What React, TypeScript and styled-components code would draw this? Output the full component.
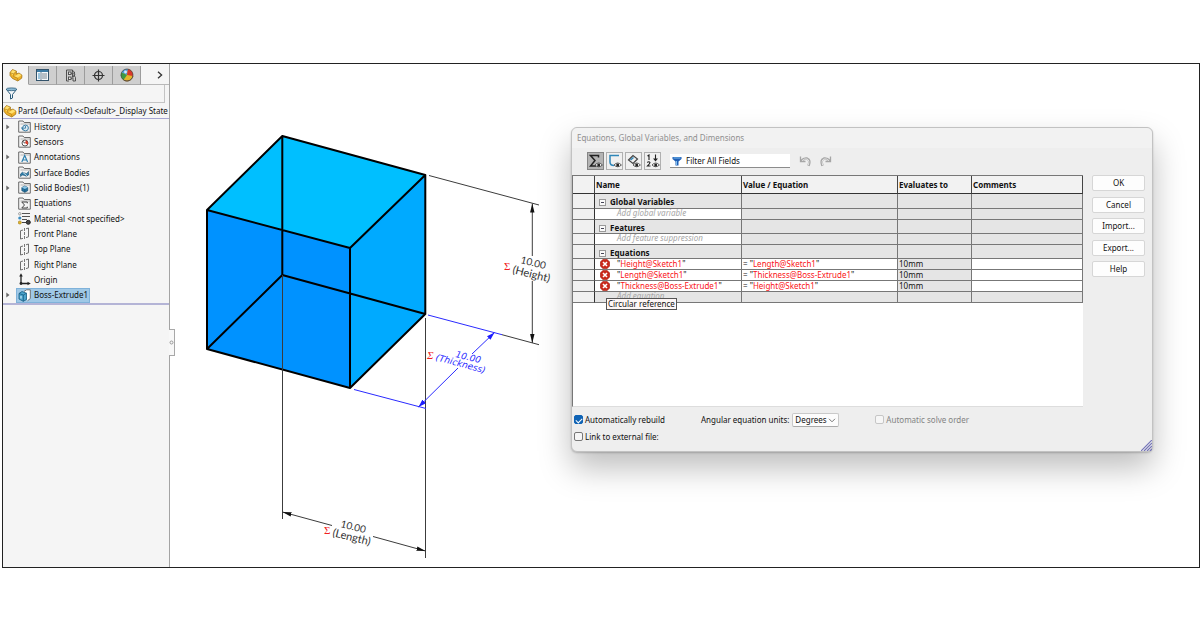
import React from 'react';
import styled, { createGlobalStyle } from 'styled-components';

const Global = createGlobalStyle`
  * { box-sizing: border-box; }
  body { margin: 0; background: #fff; }
  body, button, input, select { font-family: "Noto Sans", "Open Sans", sans-serif; font-size: 8px; line-height: 10px; color: #111; }
  svg { display: block; flex: none; }
`;

const Page = styled.div`
  min-height: 100vh;
  padding: 63px 0 62px 2px;
  display: flex;
`;
const Frame = styled.main`
  flex: 1;
  display: flex;
  border: 1px solid #222;
`;

/* ---------- feature tree ---------- */
const Sidebar = styled.aside`
  flex: none;
  width: 167px;
  background: #f5f5f5;
  border-right: 1px solid #a4a4a4;
  padding-top: 2px;
`;
const Tabs = styled.div`
  display: flex;
  height: 19px;
`;
const Tab = styled.button<{ $active?: boolean }>`
  width: ${p => (p.$active ? 26 : 28)}px;
  padding: 0;
  display: grid;
  place-items: center;
  border: 0;
  border-right: 1px solid #9c9c9c;
  border-bottom: 1px solid ${p => (p.$active ? '#f5f5f5' : '#a8a8a8')};
  background: ${p => (p.$active ? '#f5f5f5' : '#cfcfcf')};
`;
const MoreTabs = styled.button`
  flex: 1;
  padding: 0 6px 0 0;
  border: 0;
  border-bottom: 1px solid #b9b9b9;
  background: transparent;
  display: flex;
  align-items: center;
  justify-content: flex-end;
`;
const TreeFilter = styled.label`
  display: flex;
  align-items: center;
  height: 18px;
  margin-right: 4px;
  padding-left: 2px;
  border: 1px solid #c4c4c4;
  border-width: 0 1px 1px 0;
`;
const TreeFilterInput = styled.input`
  flex: 1;
  min-width: 0;
  border: 0;
  background: transparent;
  outline: 0;
`;
const RootRow = styled.div`
  display: flex;
  align-items: center;
  gap: 1px;
  height: 16px;
  white-space: nowrap;
  overflow: hidden;
  border-bottom: 1px solid #a6a6d2;
`;
const Tree = styled.ul`
  list-style: none;
  margin: 0;
  padding: 0;
  height: 186px;
  display: flex;
  flex-direction: column;
  border-bottom: 2px solid #b4b4d6;
`;
const TreeRow = styled.li`
  flex: 1;
  display: flex;
  align-items: center;
`;
const Expander = styled.button`
  width: 13px;
  height: 10px;
  padding: 0 0 0 3px;
  border: 0;
  background: transparent;
`;
const TreeItem = styled.span<{ $selected?: boolean }>`
  display: flex;
  align-items: center;
  gap: 3px;
  height: 15px;
  padding: 0 1px;
  border: 1px solid ${p => (p.$selected ? '#7fb2da' : 'transparent')};
  background: ${p => (p.$selected ? '#9fc8e6' : 'transparent')};
`;
const Spacer = styled.span`
  width: 13px;
`;

/* ---------- graphics area ---------- */
const Viewport = styled.section`
  flex: 1;
  position: relative;
  background: #fff;
`;
const PaneHandle = styled.button`
  position: absolute;
  left: -1px;
  top: 265px;
  width: 6px;
  height: 27px;
  padding: 0;
  display: grid;
  place-items: center;
  background: #f8f8f8;
  border: 1px solid #a8a8a8;
  border-left: 0;
`;

/* ---------- equations dialog ---------- */
const Dialog = styled.section`
  position: absolute;
  top: 63px;
  right: 46px;
  width: 582px;
  border: 1px solid #c2c2c2;
  border-radius: 6px;
  background: #eee;
  box-shadow: 0 16px 32px rgba(0, 0, 0, 0.26), 0 1px 2px rgba(0, 0, 0, 0.2);
`;
const DialogTitle = styled.h1`
  margin: 0;
  height: 20px;
  padding: 0 5px;
  font-size: 8px;
  line-height: 20px;
  font-weight: 400;
  color: #8f8f8f;
  background: #f2f2f2;
  border-radius: 6px 6px 0 0;
`;
const Toolbar = styled.div`
  display: flex;
  align-items: center;
  gap: 2px;
  height: 27px;
  padding: 0 15px 1px;
`;
const ToolButton = styled.button<{ $pressed?: boolean }>`
  width: 17px;
  height: 18px;
  padding: 0;
  display: grid;
  place-items: center;
  border: 1px solid ${p => (p.$pressed ? '#858585' : '#b0b0b0')};
  background: ${p => (p.$pressed ? '#b4b4b4' : '#f0f0f0')};
`;
const FieldFilter = styled.label`
  display: flex;
  align-items: center;
  gap: 4px;
  width: 120px;
  height: 14px;
  margin: 0 4px 0 7px;
  padding-left: 2px;
  background: #fff;
  border-bottom: 1px solid #8c8c8c;
`;
const FieldFilterInput = styled.input`
  flex: 1;
  min-width: 0;
  padding: 0;
  border: 0;
  outline: 0;
  background: transparent;
`;
const PlainButton = styled.button`
  width: 18px;
  padding: 0;
  display: grid;
  place-items: center;
  border: 0;
  background: transparent;
`;
const Body = styled.div`
  display: flex;
`;
const GridPane = styled.div`
  flex: 1;
  min-height: 232px;
  background: #fff;
  border-left: 1px solid #777;
  border-bottom: 1px solid #ddd;
`;
const EquationTable = styled.table`
  width: 100%;
  table-layout: fixed;
  border-spacing: 0;
  border-top: 1px solid #777;
`;
const Th = styled.th<{ $w?: number }>`
  width: ${p => (p.$w ? p.$w + 'px' : 'auto')};
  height: 18px;
  padding: 0 1px;
  text-align: left;
  font-weight: 700;
  background: #f2f2f2;
  border-right: 1px solid #444;
  border-bottom: 1px solid #333;
`;
const Td = styled.td<{ $h?: number; $tone?: 'white' | 'gray' | 'head' }>`
  position: relative;
  height: ${p => p.$h || 11}px;
  padding: 0 1px;
  line-height: 10px;
  vertical-align: top;
  white-space: nowrap;
  background: ${p => (p.$tone === 'white' ? '#fff' : p.$tone === 'head' ? '#f0f0f0' : '#e5e5e5')};
  border-right: 1px solid ${p => (p.$tone === 'head' ? '#333' : '#777')};
  border-bottom: 1px solid #777;
`;
const GroupName = styled.div`
  display: flex;
  align-items: center;
  gap: 4px;
  padding: 3px 0 0 3px;
  font-weight: 700;
`;
const Placeholder = styled.div`
  padding-left: 21px;
  line-height: 8px;
  font-style: italic;
  color: #a6a6a6;
`;
const EquationName = styled.div`
  display: flex;
  align-items: center;
  gap: 7px;
  height: 10px;
  padding-left: 4px;
`;
const Red = styled.span`
  color: #fa1420;
`;
const Tooltip = styled.div`
  position: absolute;
  z-index: 1;
  left: 11px;
  top: 6px;
  height: 12px;
  padding: 0 1px;
  line-height: 10px;
  background: #fdf6f6;
  border: 1px solid #555;
`;
const Actions = styled.div`
  width: 69px;
  height: 102px;
  padding: 0 7px 0 9px;
  display: flex;
  flex-direction: column;
  justify-content: space-between;
`;
const ActionButton = styled.button`
  height: 16px;
  padding: 0;
  border: 1px solid #d6d6d6;
  border-radius: 2px;
  background: #fdfdfd;
`;
const Footer = styled.div`
  display: flex;
  align-items: flex-start;
  height: 44px;
  padding: 6px 2px 0;
`;
const Options = styled.div`
  width: 127px;
  display: grid;
  row-gap: 4px;
`;
const Check = styled.label<{ $off?: boolean }>`
  display: flex;
  align-items: center;
  gap: 2px;
  height: 13px;
  color: ${p => (p.$off ? '#838383' : '#111')};
`;
const CheckInput = styled.input`
  appearance: none;
  width: 9px;
  height: 9px;
  margin: 0;
  border: 1px solid #777;
  border-radius: 2px;
  background: #f6f6f6;
  display: grid;
  place-items: center;
  &:disabled { border-color: #c6c6c6; }
  &:checked { background: #0f63b5; border-color: #0f63b5; }
  &:checked::after {
    content: '';
    width: 5px;
    height: 3px;
    border: solid #fff;
    border-width: 0 0 1px 1px;
    transform: rotate(-45deg);
  }
`;
const UnitsLabel = styled.label`
  display: flex;
  align-items: center;
  gap: 3px;
  margin-right: 36px;
`;
const SelectBox = styled.span`
  display: grid;
  align-items: center;
  width: 47px;
  > * { grid-area: 1 / 1; }
  > svg { justify-self: end; margin-right: 3px; pointer-events: none; }
`;
const Select = styled.select`
  appearance: none;
  height: 14px;
  padding: 0 2px;
  border: 1px solid #c9c9c9;
  border-bottom-color: #aaa;
  border-radius: 2px;
  background: #fcfcfc;
`;
const Grip = styled.span`
  position: absolute;
  right: 0;
  bottom: 0;
`;

/* ---------- icons ---------- */
const PartIcon = () => (
  <svg width="14" height="14" viewBox="0 0 14 14">
    <path d="M1 4.500L3.500 1.500L7.500 3.200L7.300 6L10 5L13 7.200L12.700 10.200L8.800 13L3.500 10.500L1 7.500Z" fill="#efb22a" stroke="#9a6a0c" strokeWidth=".7" strokeLinejoin="round" />
    <path d="M1.600 4.600L3.800 2L7 3.500L4.800 5.500L4.500 8L7 7.500L10 5.600L12.400 7.300L8.700 9.700L4.500 8Z" fill="#ffe070" />
    <path d="M1.300 4.800L4.600 5.800V8.500L8.700 10.300V12.600M4.600 5.800L7.200 3.500" fill="none" stroke="#a87612" strokeWidth=".6" />
  </svg>
);
const ListIcon = () => (
  <svg width="13" height="12" viewBox="0 0 13 12">
    <rect x=".5" y=".5" width="12" height="11" fill="#f4f8fb" stroke="#33536b" />
    <rect x="1" y="1" width="11" height="2" fill="#3b7aa3" />
    <path d="M5 3V11" stroke="#33536b" strokeWidth=".7" />
    <path d="M2.200 5h1.600M2.200 7h1.600M2.200 9h1.600" stroke="#1c7bb5" strokeWidth="1.200" />
    <path d="M6 5h5M6 7h5M6 9h5" stroke="#6b7b86" strokeWidth=".9" />
  </svg>
);
const ConfigIcon = () => (
  <svg width="12" height="13" viewBox="0 0 12 13" fill="none" stroke="#444" strokeWidth=".9">
    <path d="M1.500 12V1H7.500V3.500M1.500 12H4" />
    <rect x="3.500" y="3" width="2.500" height="2.500" fill="#eee" />
    <rect x="3.500" y="8" width="2.500" height="2.500" fill="#eee" />
    <path d="M6 4.300H7.500M6 9.300H7.500M7.500 1.500L9.500 3V7L7.500 8.200V3.500M9.500 7L10.500 8.500V12H8V8.500" />
    <circle cx="8.700" cy="5.200" r="1.100" fill="#ddd" />
  </svg>
);
const TargetIcon = () => (
  <svg width="13" height="13" viewBox="0 0 13 13" fill="none" stroke="#333" strokeWidth="1.200">
    <circle cx="6.500" cy="6.500" r="4" />
    <path d="M6.500 .5V12.500M.5 6.500H12.500" />
  </svg>
);
const BallIcon = () => (
  <svg width="14" height="14" viewBox="0 0 14 14">
    <circle cx="7" cy="7" r="6" fill="#e4b62c" />
    <path d="M7 7 L1.500 4.500 A6 6 0 0 1 8 1Z" fill="#4a9be0" />
    <path d="M7 7 L8 1 A6 6 0 0 1 12.900 8Z" fill="#d8372a" />
    <path d="M7 7 L1.500 4.500 A6 6 0 0 0 3.500 11.900Z" fill="#3d9a45" />
    <path d="M3.500 11.900 A6 6 0 0 0 12.900 8" fill="none" stroke="#8a5a1a" />
    <circle cx="7" cy="7" r="6" fill="none" stroke="#444" strokeWidth=".7" />
    <circle cx="5.500" cy="4" r="1.400" fill="#fff" opacity=".8" />
  </svg>
);
const FunnelIcon = () => (
  <svg width="13" height="13" viewBox="0 0 13 13">
    <path d="M1.500 2.500L5.500 7.500V12L7.500 11V7.500L11.500 2.500Z" fill="#f3f7fa" stroke="#2b5b7a" strokeLinejoin="round" />
    <ellipse cx="6.500" cy="2.300" rx="5.300" ry="1.400" fill="#8fbcd6" stroke="#2b5b7a" strokeWidth=".8" />
  </svg>
);
const Folder = ({ children }: { children: React.ReactNode }) => (
  <svg width="13" height="13" viewBox="0 0 13 13">
    <path d="M.7 12.200V1H5L6.200 2.500H12.300V12.200Z" fill="#f4f4f4" stroke="#6b6b6b" />
    <path d="M2.500 4H12" stroke="#999" strokeWidth=".7" />
    {children}
  </svg>
);
const HistoryIcon = () => (
  <Folder>
    <circle cx="7.500" cy="8" r="2.900" fill="#dceaf2" stroke="#3c7ea6" />
    <path d="M7.500 6V8.200H5.500" fill="none" stroke="#3c7ea6" strokeWidth=".9" />
    <path d="M2.800 7.500L4.700 10.500L5.500 7.500Z" fill="#3c7ea6" />
  </Folder>
);
const SensorsIcon = () => (
  <Folder>
    <circle cx="7" cy="8" r="3" fill="#fff" stroke="#555" />
    <path d="M7 8L8 5.200A3 3 0 0 1 9.500 9.800Z" fill="#d43c2c" />
    <path d="M5 6.500L7 8.300" stroke="#333" strokeWidth=".9" />
  </Folder>
);
const AnnotationsIcon = () => (
  <Folder>
    <path d="M3.800 11L6.700 4.500L9.600 11M5 9H8.500" fill="none" stroke="#2d80b0" strokeWidth="1.200" />
  </Folder>
);
const SurfaceIcon = () => (
  <Folder>
    <path d="M2.500 8Q4.500 5 6.500 7T10.500 5.500V9Q8.500 11 6.500 9.500T2.500 10.500Z" fill="#2f7fab" stroke="#174d6d" strokeWidth=".6" />
    <path d="M5 6.500L9 9.800" stroke="#fff" strokeWidth=".7" />
  </Folder>
);
const SolidIcon = () => (
  <Folder>
    <path d="M3.800 6.500L6.800 5L9.800 6.500V9.700L6.800 11.300L3.800 9.700Z" fill="#2673a0" stroke="#13486a" strokeWidth=".6" />
    <path d="M3.800 6.500L6.800 8L9.800 6.500L6.800 5Z" fill="#8cc4e4" />
    <path d="M6.800 8V11.300" stroke="#13486a" strokeWidth=".6" />
  </Folder>
);
const SigmaFolderIcon = () => (
  <Folder>
    <path d="M9.300 6.300V5H3.800L6.500 8L3.800 11H9.300V9.700" fill="none" stroke="#444" strokeWidth="1" />
  </Folder>
);
const MaterialIcon = () => (
  <svg width="13" height="13" viewBox="0 0 13 13">
    <path d="M4 1.500H12M4 4.500H12M4 7.500H9" stroke="#555" strokeWidth="1.100" />
    <circle cx="1.800" cy="1.800" r="1.200" fill="#fff" stroke="#777" strokeWidth=".7" />
    <circle cx="1.800" cy="6" r="1.600" fill="#3b8cc0" />
    <circle cx="1.800" cy="10.500" r="1.600" fill="#e3b52a" stroke="#8a6a10" strokeWidth=".5" />
    <path d="M4 10.500H8" stroke="#444" />
    <circle cx="10.300" cy="10.300" r="2" fill="#444" stroke="#222" />
  </svg>
);
const PlaneIcon = () => (
  <svg width="13" height="13" viewBox="0 0 13 13" fill="none" stroke="#6f6f6f">
    <path d="M5 3L2.500 3.700V12L5 11.300M8 1.800L10.500 1V9.800L8 10.600" />
    <path d="M6.500 1V12.500" stroke="#777" strokeDasharray="3 1" />
  </svg>
);
const OriginIcon = () => (
  <svg width="13" height="13" viewBox="0 0 13 13">
    <path d="M3 2.500V10.500H10" fill="none" stroke="#222" strokeWidth="1.300" />
    <path d="M3 .3L4.800 3.500H1.200ZM12.800 10.500L9.500 12.300V8.700Z" fill="#222" />
    <circle cx="3" cy="10.500" r="1.400" fill="#222" />
  </svg>
);
const ExtrudeIcon = () => (
  <svg width="13" height="13" viewBox="0 0 13 13">
    <path d="M6 2.500L8.500 .8H12.300V9.500L9.500 11.800" fill="#fff" stroke="#666" strokeWidth=".9" />
    <path d="M1 4.500L4 2.500L8.500 4.200V10.500L5.300 12.300L1 10Z" fill="#4da5cd" stroke="#155a80" strokeWidth=".8" />
    <path d="M1 4.500L5.300 6L8.500 4.200M5.300 6V12.300" fill="none" stroke="#155a80" strokeWidth=".8" />
    <path d="M3 7V9.500" stroke="#e2f5ff" />
  </svg>
);
const Eye = () => (
  <g>
    <path d="M6 11Q9.700 7 13.400 11Q9.700 14.500 6 11Z" fill="#fff" stroke="#333" strokeWidth=".8" />
    <circle cx="9.700" cy="10.900" r="1.500" fill="#222" />
  </g>
);
const ToolSvg = ({ children }: { children: React.ReactNode }) => (
  <svg width="14" height="14" viewBox="0 0 14 14" fill="none">
    {children}
    <Eye />
  </svg>
);
const ErrorIcon = () => (
  <svg width="10" height="10" viewBox="0 0 10 10">
    <path d="M3 .2H7L9.800 3V7L7 9.800H3L.2 7V3Z" fill="#c9281a" stroke="#8e1a10" strokeWidth=".4" />
    <path d="M3 3L7 7M7 3L3 7" stroke="#fff" strokeWidth="1.600" />
  </svg>
);
const MinusBox = () => (
  <svg width="7" height="7" viewBox="0 0 7 7">
    <rect x=".5" y=".5" width="6" height="6" fill="#fafafa" stroke="#9a9a9a" />
    <path d="M2 3.500H5" stroke="#445" />
  </svg>
);
const UndoGlyph = ({ flip }: { flip?: boolean }) => (
  <svg width="13" height="11" viewBox="0 0 13 11">
    <g transform={flip ? 'translate(13 0) scale(-1 1)' : undefined} fill="none">
      <path d="M1.500 .5V5.500H6.500" stroke="#a6a6a6" strokeWidth="1.300" />
      <path d="M2.200 5Q5 2 8 2.600Q11.800 4 9.500 9.800" stroke="#a6a6a6" strokeWidth="2.600" />
      <path d="M3 4.700Q5.500 2.300 8 3Q10.900 4.300 9.300 9" stroke="#ececec" strokeWidth=".9" />
    </g>
  </svg>
);

/* ---------- data ---------- */
const features: { label: string; icon: React.ReactNode; open?: boolean; selected?: boolean }[] = [
  { label: 'History', icon: <HistoryIcon />, open: true },
  { label: 'Sensors', icon: <SensorsIcon /> },
  { label: 'Annotations', icon: <AnnotationsIcon />, open: true },
  { label: 'Surface Bodies', icon: <SurfaceIcon /> },
  { label: 'Solid Bodies(1)', icon: <SolidIcon />, open: true },
  { label: 'Equations', icon: <SigmaFolderIcon /> },
  { label: 'Material <not specified>', icon: <MaterialIcon /> },
  { label: 'Front Plane', icon: <PlaneIcon /> },
  { label: 'Top Plane', icon: <PlaneIcon /> },
  { label: 'Right Plane', icon: <PlaneIcon /> },
  { label: 'Origin', icon: <OriginIcon /> },
  { label: 'Boss-Extrude1', icon: <ExtrudeIcon />, open: true, selected: true },
];
const equations = [
  ['Height@Sketch1', 'Length@Sketch1'],
  ['Length@Sketch1', 'Thickness@Boss-Extrude1'],
  ['Thickness@Boss-Extrude1', 'Height@Sketch1'],
];

const Model = () => (
  <svg width="400" height="500" viewBox="170 64 400 500" role="img" aria-label="Dimensioned cube">
    <defs>
      <marker id="tip" markerUnits="userSpaceOnUse" markerWidth="10" markerHeight="6" refX="9" refY="3" orient="auto">
        <path d="M9 3L0 .8V5.200Z" fill="#111" />
      </marker>
      <marker id="tipBlue" markerUnits="userSpaceOnUse" markerWidth="10" markerHeight="6" refX="8" refY="3" orient="auto">
        <path d="M8 3L0 .5V5.500Z" fill="#1c1cff" />
      </marker>
    </defs>
    <path d="M282.300 136L425.300 175L350 248L207 210Z" fill="#00bfff" />
    <path d="M207 210L350 248V388L207 349Z" fill="#0092ff" />
    <path d="M350 248L425.300 175V314L350 388Z" fill="#00aaff" />
    <g stroke="#000" strokeWidth="2" fill="none" strokeLinejoin="round" strokeLinecap="round">
      <path d="M282.300 136L425.300 175L350 248L207 210ZM207 210V349L350 388V248M350 388L425.300 314V175M282.300 136V275L425.300 314M282.300 275L207 349" />
    </g>
    <g stroke="#3c3c3c" strokeWidth="1" fill="none">
      <path d="M282.500 275V519M425.500 318V558" />
      <path d="M429 175.500L539 205M502 334.700L539 344.700" />
      <path d="M532.300 256V203.500" markerEnd="url(#tip)" />
      <path d="M532.300 281V343" markerEnd="url(#tip)" />
      <path d="M332 525.500L282.500 512" markerEnd="url(#tip)" />
      <path d="M373 536.500L425.500 551" markerEnd="url(#tip)" />
    </g>
    <g stroke="#2a2aff" strokeWidth="1" fill="none">
      <path d="M428 315L502 334.700M354 389.500L426 408.500" />
      <path d="M472 354L494.500 332.500" markerEnd="url(#tipBlue)" />
      <path d="M458 368L418.500 407" markerEnd="url(#tipBlue)" />
    </g>
    <g fontFamily="Lato, sans-serif" fontSize="10" fill="#333">
      <text transform="translate(520 263) rotate(14)">10.00</text>
      <text fontSize="11" transform="translate(512 273) rotate(14)">(Height)</text>
      <text transform="translate(340 527) rotate(14)">10.00</text>
      <text fontSize="11" transform="translate(332 536) rotate(14)">(Length)</text>
    </g>
    <g fontFamily="DejaVu Sans, sans-serif" fontStyle="italic" fill="#2a2aff">
      <text fontSize="9" transform="translate(455 357) rotate(14)">10.00</text>
      <text fontSize="9" transform="translate(435 360) rotate(15)">(Thickness)</text>
    </g>
    <g fontFamily="Liberation Serif, serif" fontSize="11" fill="#f02020">
      <text x="504" y="270">Σ</text>
      <text x="324" y="534">Σ</text>
      <text x="427" y="359" fontStyle="italic">Σ</text>
    </g>
  </svg>
);

const GroupRows = ({ title, hint, h, children, tip }: { title: string; hint: string; h: number; children?: React.ReactNode; tip?: string }) => (
  <>
    <tr>
      <Td $h={h} $tone="head" />
      <Td><GroupName><MinusBox />{title}</GroupName></Td>
      <Td /><Td /><Td />
    </tr>
    {children}
    <tr>
      <Td $tone="head" />
      <Td $tone={tip ? 'gray' : 'white'}>
        <Placeholder>{hint}</Placeholder>
        {tip && <Tooltip role="tooltip">{tip}</Tooltip>}
      </Td>
      <Td /><Td /><Td />
    </tr>
  </>
);

export default function App() {
  return (
    <Page>
      <Global />
      <Frame>
        <Sidebar>
          <Tabs>
            <Tab $active aria-label="Feature tree"><PartIcon /></Tab>
            <Tab aria-label="Properties"><ListIcon /></Tab>
            <Tab aria-label="Configurations"><ConfigIcon /></Tab>
            <Tab aria-label="Dimension manager"><TargetIcon /></Tab>
            <Tab aria-label="Display manager"><BallIcon /></Tab>
            <MoreTabs aria-label="More tabs">
              <svg width="6" height="8" viewBox="0 0 6 8"><path d="M1 .8L4.600 4L1 7.200" fill="none" stroke="#333" strokeWidth="1.300" /></svg>
            </MoreTabs>
          </Tabs>
          <TreeFilter>
            <FunnelIcon />
            <TreeFilterInput type="text" aria-label="Filter tree" />
          </TreeFilter>
          <RootRow><PartIcon />{'Part4 (Default) <<Default>_Display State'}</RootRow>
          <Tree>
            {features.map(f => (
              <TreeRow key={f.label}>
                {f.open ? (
                  <Expander aria-label={'Expand ' + f.label}>
                    <svg width="4" height="6" viewBox="0 0 4 6"><path d="M.3 .6L3.500 3L.3 5.400Z" fill="#666" /></svg>
                  </Expander>
                ) : <Spacer />}
                <TreeItem $selected={f.selected}>{f.icon}{f.label}</TreeItem>
              </TreeRow>
            ))}
          </Tree>
        </Sidebar>

        <Viewport>
          <Model />
          <PaneHandle aria-label="Collapse panel">
            <svg width="5" height="5" viewBox="0 0 5 5"><circle cx="2.500" cy="2.500" r="1.500" fill="none" stroke="#999" /></svg>
          </PaneHandle>

          <Dialog role="dialog" aria-labelledby="dlg">
            <DialogTitle id="dlg">Equations, Global Variables, and Dimensions</DialogTitle>
            <Toolbar>
              <ToolButton $pressed aria-label="Equation view">
                <ToolSvg><path d="M9.500 3.500V1.500H1.500L6 6.500L1.500 12H7" stroke="#222" strokeWidth="1.500" /></ToolSvg>
              </ToolButton>
              <ToolButton aria-label="Sketch equation view">
                <ToolSvg><path d="M11 1.500H2V8Q2 11.500 6 11.500" stroke="#2f86b8" strokeWidth="1.500" /></ToolSvg>
              </ToolButton>
              <ToolButton aria-label="Dimension view">
                <ToolSvg>
                  <path d="M1.500 6L6 1.500L10.500 5L6 9.500Z" stroke="#444" strokeWidth="1.200" />
                  <path d="M3.500 6L6.500 3.500" stroke="#2f86b8" strokeWidth="1.500" />
                </ToolSvg>
              </ToolButton>
              <ToolButton aria-label="Ordered view">
                <ToolSvg>
                  <path d="M1.500 2L3 1V6M1.300 8.500Q3 7 4 8.500Q4 9.500 1.500 12H4.500M9.500 .5V5" stroke="#222" strokeWidth="1.100" />
                  <path d="M7 4.500H12L9.500 7.500Z" fill="#222" />
                </ToolSvg>
              </ToolButton>
              <FieldFilter>
                <svg width="10" height="10" viewBox="0 0 10 10">
                  <path d="M.5 1H9.500V3L6.500 5.500V9.500H3.500V5.500L.5 3Z" fill="#1f5fb5" />
                  <path d="M1.500 2H8.500M4.500 5V9" stroke="#7fc0f0" />
                </svg>
                <FieldFilterInput type="text" aria-label="Filter" defaultValue="Filter All Fields" />
              </FieldFilter>
              <PlainButton aria-label="Undo"><UndoGlyph /></PlainButton>
              <PlainButton aria-label="Redo"><UndoGlyph flip /></PlainButton>
            </Toolbar>

            <Body>
              <GridPane>
                <EquationTable>
                  <thead>
                    <tr>
                      <Th $w={22} aria-label="Row" />
                      <Th $w={147}>Name</Th>
                      <Th $w={156}>Value / Equation</Th>
                      <Th $w={74}>Evaluates to</Th>
                      <Th>Comments</Th>
                    </tr>
                  </thead>
                  <tbody>
                    <GroupRows title="Global Variables" hint="Add global variable" h={15} />
                    <GroupRows title="Features" hint="Add feature suppression" h={14} />
                    <GroupRows title="Equations" hint="Add equation" h={14} tip="Circular reference">
                      {equations.map(([name, value]) => (
                        <tr key={name}>
                          <Td $tone="head" />
                          <Td $tone="white"><EquationName><ErrorIcon /><span>"<Red>{name}</Red>"</span></EquationName></Td>
                          <Td $tone="white">= "<Red>{value}</Red>"</Td>
                          <Td>10mm</Td>
                          <Td $tone="white" />
                        </tr>
                      ))}
                    </GroupRows>
                  </tbody>
                </EquationTable>
              </GridPane>
              <Actions>
                {['OK', 'Cancel', 'Import...', 'Export...', 'Help'].map(a => <ActionButton key={a}>{a}</ActionButton>)}
              </Actions>
            </Body>

            <Footer>
              <Options>
                <Check><CheckInput type="checkbox" defaultChecked />Automatically rebuild</Check>
                <Check><CheckInput type="checkbox" />Link to external file:</Check>
              </Options>
              <UnitsLabel>
                Angular equation units:
                <SelectBox>
                  <Select defaultValue="Degrees"><option>Degrees</option><option>Radians</option></Select>
                  <svg width="8" height="5" viewBox="0 0 8 5"><path d="M1 .8L4 3.800L7 .8" fill="none" stroke="#777" /></svg>
                </SelectBox>
              </UnitsLabel>
              <Check $off><CheckInput type="checkbox" disabled />Automatic solve order</Check>
            </Footer>
            <Grip>
              <svg width="11" height="11" viewBox="0 0 11 11"><path d="M0 11L11 0M3 11L11 3M6 11L11 6M9 11L11 9" stroke="#7474b8" strokeWidth="1.200" /></svg>
            </Grip>
          </Dialog>
        </Viewport>
      </Frame>
    </Page>
  );
}
